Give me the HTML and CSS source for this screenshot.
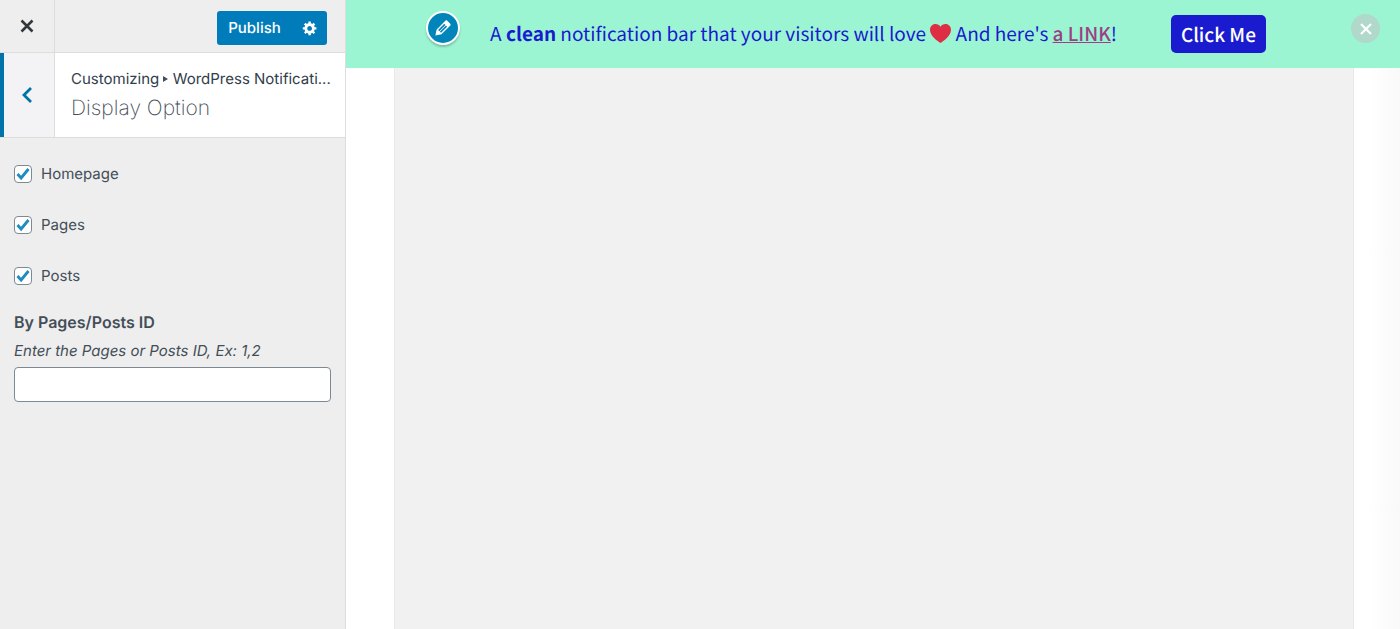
FILE: index.html
```html
<!DOCTYPE html>
<html lang="en">
<head>
    <meta charset="UTF-8">
    <meta name="viewport" content="width=device-width, initial-scale=1.0">
    <title>Customize: Display Option</title>
    <link rel="stylesheet" href="styles.css">
</head>
<body>

<div class="customizer">
    <!-- Sidebar controls -->
    <form class="sidebar">
        <div class="actions">
            <button type="button" class="close-panel" aria-label="Close">
                <svg width="14" height="14" viewBox="0 0 14 14"><path d="M1.500 1.500l11 11M12.500 1.500l-11 11" stroke="#32373c" stroke-width="2.600" fill="none"/></svg>
            </button>
            <div class="publish">
                <button type="button" class="publish-save">Publish</button>
                <button type="button" class="publish-settings" aria-label="Publish settings">
                    <svg width="16" height="16" viewBox="0 0 20 20"><path fill="#fff" d="M18 12h-2.180c-.17.700-.440 1.350-.810 1.930l1.540 1.540-2.100 2.100-1.540-1.540c-.580.360-1.230.630-1.910.790V19H8v-2.180c-.680-.160-1.330-.430-1.910-.790l-1.540 1.540-2.120-2.120 1.540-1.540c-.360-.580-.630-1.230-.790-1.910H1V9.030h2.170c.160-.700.440-1.350.800-1.940L2.430 5.550l2.100-2.100 1.540 1.540c.580-.370 1.240-.640 1.930-.810V2h3v2.180c.680.160 1.330.430 1.910.790l1.540-1.540 2.120 2.120-1.540 1.540c.360.590.640 1.240.800 1.940H18V12zm-8.500 1.500c1.660 0 3-1.340 3-3s-1.340-3-3-3-3 1.340-3 3 1.340 3 3 3z"/></svg>
                </button>
            </div>
        </div>

        <div class="section-title">
            <button type="button" class="back" aria-label="Back">
                <svg width="12" height="18" viewBox="0 0 12 18"><path d="M10 2L3 9l7 7" stroke="#0073aa" stroke-width="2.800" fill="none"/></svg>
            </button>
            <div class="heading">
                <div class="breadcrumb">Customizing <span class="arrow"></span> WordPress Notificati...</div>
                <h1>Display Option</h1>
            </div>
        </div>

        <div class="controls">
            <label class="check"><input type="checkbox" checked>Homepage</label>
            <label class="check"><input type="checkbox" checked>Pages</label>
            <label class="check"><input type="checkbox" checked>Posts</label>

            <label class="field-title" for="page-ids">By Pages/Posts ID</label>
            <p class="description" id="page-ids-help">Enter the Pages or Posts ID, Ex: 1,2</p>
            <input type="text" class="text-input" id="page-ids" aria-describedby="page-ids-help">
        </div>
    </form>

    <!-- Site preview -->
    <main class="preview">
        <div class="notification">
            <button type="button" class="edit-shortcut" aria-label="Edit notification bar">
                <svg width="22" height="22" viewBox="0 0 20 20"><path fill="#fff" d="M13.890 3.390l2.710 2.720c.46.460.42 1.240.030 1.640l-8.010 8.020-5.560 1.160 1.160-5.580s7.600-7.630 7.990-8.030c.39-.390 1.220-.390 1.680.070zm-2.730 2.790l-5.590 5.610 1.110 1.110 5.540-5.650zm-2.970 8.230l5.580-5.600-1.070-1.080-5.590 5.600z"/></svg>
            </button>
            <p class="message">A <b>clean</b> notification bar that your visitors will love <svg class="heart" viewBox="0 0 21 19" role="img" aria-label="love"><path fill="#dd2e44" d="M10.500 19C7 16.700 0 12 0 5.800 0 2.500 2.400 0 5.500 0c2.100 0 3.900 1 5 2.700C11.600 1 13.400 0 15.500 0 18.600 0 21 2.500 21 5.800 21 12 14 16.700 10.500 19z"/></svg> And here's <a href="#">a LINK</a>!</p>
            <button type="button" class="click-me">Click Me</button>
            <button type="button" class="dismiss" aria-label="Dismiss">
                <svg width="12" height="12" viewBox="0 0 12 12"><path d="M1 1l10 10M11 1L1 11" stroke="#fff" stroke-width="2.200" fill="none"/></svg>
            </button>
        </div>
        <div class="page">
            <div class="page-content"></div>
        </div>
    </main>
</div>

</body>
</html>
```
FILE: styles.css
```css
* {
    box-sizing: border-box;
}

body {
    margin: 0;
    font-family: Inter, "Liberation Sans", sans-serif;
    font-size: 15px;
    line-height: 20px;
    color: #444e58;
    text-rendering: geometricPrecision;
}

button {
    display: flex;
    align-items: center;
    justify-content: center;
    padding: 0;
    border: none;
    font-family: inherit;
    text-rendering: inherit;
    cursor: pointer;
}

.customizer {
    display: flex;
    min-height: 100vh;
}

/* Sidebar */
.sidebar {
    flex: 0 0 346px;
    background: #eee;
    border-right: 1px solid #ddd;
}

.actions {
    display: flex;
    justify-content: space-between;
    align-items: center;
    height: 53px;
    padding-right: 18px;
    border-bottom: 1px solid #ddd;
}

.close-panel {
    width: 55px;
    height: 52px;
    background: #eee;
    border-right: 1px solid #ddd;
}

.publish {
    display: flex;
    height: 34px;
    margin-top: 3px;
    border-radius: 3px;
    overflow: hidden;
}

.publish button {
    background: #007cba;
    color: #fff;
}

.publish-save {
    width: 75px;
    font-size: 15px;
    font-weight: 500;
}

.publish-settings {
    width: 35px;
}

.section-title {
    display: flex;
    background: #fff;
    border-bottom: 1px solid #ddd;
}

.back {
    width: 55px;
    background: #f3f3f5;
    border-left: 4px solid #0073aa;
    border-right: 1px solid #ddd;
    padding-right: 4px;
}

.heading {
    flex: 1;
    padding: 16px 0 14px 16px;
    white-space: nowrap;
}

.breadcrumb {
    color: #32404c;
}

.arrow {
    display: inline-block;
    border-left: 5px solid #444e58;
    border-top: 3px solid transparent;
    border-bottom: 3px solid transparent;
    vertical-align: 2px;
}

h1 {
    margin: 6px 0 0;
    font-size: 21px;
    line-height: 28px;
    font-weight: 200;
    color: #444e58;
}

.controls {
    padding: 25px 14px;
}

.check {
    display: flex;
    align-items: center;
    gap: 9px;
    height: 21px;
    margin-bottom: 30px;
}

.check input {
    appearance: none;
    width: 18px;
    height: 18px;
    margin: 0;
    border: 1px solid #7e8993;
    border-radius: 4px;
    background: #fff;
}

.check input:checked {
    background: #fff url("data:image/svg+xml,%3Csvg xmlns='http://www.w3.org/2000/svg' viewBox='0 0 16 16'%3E%3Cpath d='M2.500 8l3.600 4L13.500 3' stroke='%231e8cbe' stroke-width='2.800' fill='none'/%3E%3C/svg%3E") center / 16px no-repeat;
}

.field-title {
    display: block;
    margin-top: -5px;
    font-size: 16px;
    line-height: 22px;
    font-weight: 600;
}

.description {
    margin: 8px 0 6px;
    font-style: italic;
}

.text-input {
    display: block;
    width: 100%;
    height: 35px;
    padding: 0 8px;
    border: 1px solid #7e8993;
    border-radius: 4px;
    background: #fff;
    font: inherit;
}

/* Preview */
.preview {
    flex: 1;
    display: flex;
    flex-direction: column;
    background: linear-gradient(to right, #fff calc(100% - 32px), #f9f9f9);
}

.notification {
    position: relative;
    display: flex;
    align-items: center;
    justify-content: center;
    gap: 54px;
    height: 68px;
    padding-left: 10px;
    background: #9bf5d2;
    font-family: "Noto Sans CJK SC", sans-serif;
    font-size: 19px;
    line-height: 28px;
    color: #1a1acf;
}

.message {
    margin: 0;
    white-space: nowrap;
}

.message a {
    color: #9b3f86;
    font-weight: 500;
    text-decoration: underline;
}

.heart {
    width: 21px;
    height: 19px;
    vertical-align: -2px;
}

.click-me {
    height: 38px;
    padding: 0 10px;
    border-radius: 5px;
    background: #1a1acf;
    color: #fff;
    font-size: 19px;
    font-weight: 500;
}

/* Buttons floating over the bar */
.edit-shortcut {
    position: absolute;
    left: 80px;
    top: 11px;
    width: 34px;
    height: 34px;
    border: 2px solid #fff;
    border-radius: 50%;
    background: #0085ba;
    box-shadow: 0 2px 2px rgba(60, 67, 74, 0.3);
}

.dismiss {
    position: absolute;
    right: 20px;
    top: 14px;
    width: 29px;
    height: 29px;
    border-radius: 50%;
    background: #b0d8cb;
}

.page {
    flex: 1;
    display: flex;
    padding: 0 46px 0 48px;
}

.page-content {
    flex: 1;
    background: #f1f1f1;
    border: solid #e9e9e9;
    border-width: 0 1px;
}
```
